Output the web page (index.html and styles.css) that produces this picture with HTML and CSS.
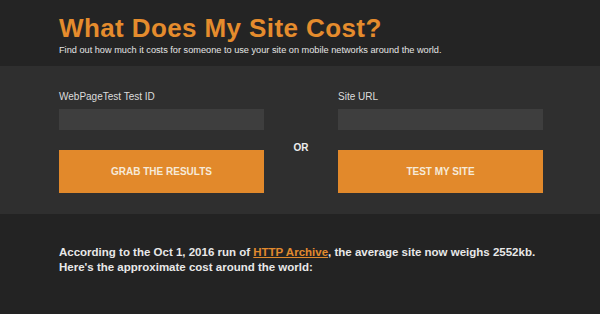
FILE: index.html
```html
<!DOCTYPE html>
<html lang="en">
<head>
<meta charset="utf-8">
<title>What Does My Site Cost?</title>
<link rel="stylesheet" href="styles.css">
</head>
<body>
<header class="header">
  <div class="wrap">
    <h1 class="title">What Does My Site Cost?</h1>
    <p class="subtitle">Find out how much it costs for someone to use your site on mobile networks around the world.</p>
  </div>
</header>
<section class="panel">
  <form class="wrap form">
    <label class="label col-left" for="testid">WebPageTest Test ID</label>
    <label class="label col-right" for="siteurl">Site URL</label>
    <input class="field col-left" id="testid" type="text">
    <input class="field col-right" id="siteurl" type="text">
    <div class="or">OR</div>
    <button class="btn col-left" type="button">GRAB THE RESULTS</button>
    <button class="btn col-right" type="button">TEST MY SITE</button>
  </form>
</section>
<section class="results">
  <div class="wrap">
    <p class="intro">According to the Oct 1, 2016 run of <a href="#" class="link">HTTP Archive</a>, the average site now weighs 2552kb. Here's the approximate cost around the world:</p>
  </div>
</section>
</body>
</html>
```
FILE: styles.css
```css
html, body {
  margin: 0;
  padding: 0;
  background: #232323;
  font-family: "Liberation Sans", Arial, sans-serif;
  color: #e6e6e6;
}
.wrap {
  margin-left: 59px;
  width: 490px;
}
.header {
  background: #242424;
  padding: 13px 0 10px;
}
.title {
  margin: 0;
  font-size: 26px;
  line-height: 30px;
  font-weight: bold;
  letter-spacing: 0.4px;
  color: #e58c2d;
}
.subtitle {
  margin: 1px 0 0;
  font-size: 9.2px;
  line-height: 12px;
  color: #e4e4e4;
}
.panel {
  background: #2f2f2f;
  padding: 25px 0 21px;
}
.form {
  display: grid;
  grid-template-columns: 205px 74px 205px;
  grid-template-rows: 12px 27px 63px;
}
.col-left { grid-column: 1; }
.col-right { grid-column: 3; }
.label {
  grid-row: 1;
  font-size: 10px;
  line-height: 12px;
  color: #dcdcdc;
}
.field {
  grid-row: 2;
  margin-top: 6px;
  height: 21px;
  box-sizing: border-box;
  border: 0;
  background: #3e3e3e;
  padding: 0 6px;
  outline: none;
}
.btn {
  grid-row: 3;
  margin-top: 20px;
  height: 43px;
  border: 0;
  background: #e2892b;
  color: #f6ead9;
  font-family: "Liberation Sans", Arial, sans-serif;
  font-weight: bold;
  font-size: 10px;
  padding: 0;
}
.or {
  grid-column: 2;
  grid-row: 3;
  align-self: start;
  margin-top: 12px;
  text-align: center;
  font-weight: bold;
  font-size: 10px;
  line-height: 12px;
  color: #ececec;
}
.results {
  padding-top: 31px;
}
.intro {
  margin: 0;
  font-size: 11.5px;
  line-height: 15px;
  font-weight: bold;
  color: #e8e8e8;
}
.link {
  color: #e08a2e;
}
```
